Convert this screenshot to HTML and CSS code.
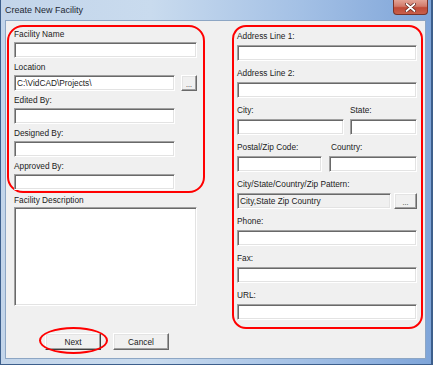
FILE: index.html
```html
<!DOCTYPE html>
<html lang="en">
<head>
  <meta charset="UTF-8">
  <title>Create New Facility</title>
  <link rel="stylesheet" href="styles.css">
</head>
<body>

<div class="window">
  <div class="titlebar">
    <span class="title">Create New Facility</span>
    <span class="close">
      <svg width="11" height="9" viewBox="0 0 11 9">
        <path d="M1.5 1 L9.5 8 M9.5 1 L1.5 8" stroke="#5a2018" stroke-width="3.2" stroke-linecap="round"/>
        <path d="M1.5 1 L9.5 8 M9.5 1 L1.5 8" stroke="#fff" stroke-width="1.8" stroke-linecap="round"/>
      </svg>
    </span>
  </div>

  <div class="client">
    <!-- left column: facility info -->
    <div class="col-left">
      <div class="group group-left">
        <div class="field">
          <label>Facility Name</label>
          <input class="box wide" type="text">
        </div>
        <div class="field">
          <label>Location</label>
          <div class="row">
            <input class="box" type="text" value="C:\VidCAD\Projects\">
            <button class="btn browse">...</button>
          </div>
        </div>
        <div class="field">
          <label>Edited By:</label>
          <input class="box" type="text">
        </div>
        <div class="field">
          <label>Designed By:</label>
          <input class="box" type="text">
        </div>
        <div class="field">
          <label>Approved By:</label>
          <input class="box" type="text">
        </div>
      </div>

      <label class="desc-label">Facility Description</label>
      <textarea class="box desc"></textarea>

      <div class="actions">
        <span class="marked"><button class="btn action default">Next</button></span>
        <button class="btn action">Cancel</button>
      </div>
    </div>

    <!-- right column: address -->
    <div class="col-right">
      <div class="group group-right">
        <div class="field">
          <label>Address Line 1:</label>
          <input class="box" type="text">
        </div>
        <div class="field">
          <label>Address Line 2:</label>
          <input class="box" type="text">
        </div>
        <div class="pair city-state">
          <div>
            <label>City:</label>
            <input class="box" type="text">
          </div>
          <div>
            <label>State:</label>
            <input class="box" type="text">
          </div>
        </div>
        <div class="pair zip-country">
          <div>
            <label>Postal/Zip Code:</label>
            <input class="box" type="text">
          </div>
          <div>
            <label class="indent">Country:</label>
            <input class="box" type="text">
          </div>
        </div>
        <div class="field">
          <label>City/State/Country/Zip Pattern:</label>
          <div class="row pattern">
            <input class="box readonly" type="text" value="City,State Zip Country" readonly>
            <button class="btn browse">...</button>
          </div>
        </div>
        <div class="field">
          <label>Phone:</label>
          <input class="box" type="text">
        </div>
        <div class="field">
          <label>Fax:</label>
          <input class="box" type="text">
        </div>
        <div class="field">
          <label>URL:</label>
          <input class="box" type="text">
        </div>
      </div>
    </div>
  </div>
</div>

</body>
</html>
```

FILE: styles.css
```css
body { margin: 0; font-family: "Liberation Sans", Arial, sans-serif; font-size: 8.3px; color: #1b1b1b; }

.window { width: 433px; height: 365px; box-sizing: border-box; display: flex; flex-direction: column; border: 1px solid #3d5f8c; border-top: 0; border-right-width: 2px; padding: 0 5px 5px 4px; background: linear-gradient(90deg, #c3d5ea 0%, #c9dbee 35%, #a3c0e5 70%, #7fa5d9 100%); }

.titlebar { height: 20px; flex: none; display: flex; justify-content: space-between; align-items: flex-start; margin-right: -2px; }
.title { font-size: 9px; line-height: 20px; color: #1e2833; }
.close { width: 35px; height: 15px; box-sizing: border-box; display: flex; align-items: center; justify-content: center; border: 1px solid #7a3328; border-top: 0; border-radius: 0 0 4px 4px; background: linear-gradient(#e3a496 0%, #d27a6a 45%, #c04a37 55%, #c8604b 100%); }

.client { flex: 1; display: flex; gap: 27px; padding: 4px 0 0 1px; background: #f0f0f0; border: 1px solid #8da6c4; }

.group { border: 2px solid #f00; }
.group-left { width: 198px; box-sizing: border-box; padding: 2px 6px 1px 5px; border-radius: 16px; }
.group-right { width: 191px; box-sizing: border-box; padding: 4px 4px 7px 3px; border-radius: 14px; }

label { display: block; height: 10px; line-height: 10px; white-space: nowrap; }
.group-left label { margin-bottom: 3px; }
.group-left .field + .field { margin-top: 4px; }
.group-right label { margin-bottom: 4px; }
.group-right .field + .field,
.group-right .field + .pair,
.group-right .pair + .pair,
.group-right .pair + .field { margin-top: 7px; }
.indent { padding-left: 2px; }

.box { display: block; box-sizing: border-box; width: 161px; height: 16px; margin: 0; padding: 0 2px; font: inherit; color: #1b1b1b; background: #fff; border: 1px solid; border-color: #a0a0a0 #fff #fff #a0a0a0; box-shadow: inset 1px 1px 0 #696969, inset -1px -1px 0 #e3e3e3; outline: none; }
.group-right .box { width: 180px; }
.box.wide { width: 183px; }
.box.readonly { background: #f0f0f0; }

.row { display: flex; gap: 6px; }
.row.pattern { gap: 3px; }
.group-right .row.pattern .box { width: 154px; }

.pair { display: grid; }
.city-state { grid-template-columns: 107px 67px; column-gap: 6px; }
.zip-country { grid-template-columns: 85px 88px; column-gap: 7px; }
.group-right .pair .box { width: 100%; }

.btn { box-sizing: border-box; margin: 0; padding: 0; font: inherit; color: #1b1b1b; background: #f0f0f0; border: 1px solid; border-color: #fff #696969 #696969 #fff; box-shadow: inset -1px -1px 0 #a0a0a0, inset 1px 1px 0 #e3e3e3; }
.browse { width: 16px; height: 16px; font-size: 7px; line-height: 14px; padding-top: 2px; }
.pattern .browse { width: 23px; }

.desc-label { margin: 2px 0 2px 7px; }
.desc { width: 183px; height: 99px; margin-left: 7px; resize: none; }

.actions { display: flex; gap: 12px; margin: 27px 0 0 38px; }
.action { width: 56px; height: 17px; }
.default { border-color: #fff #404040 #404040 #fff; }
.marked { position: relative; display: block; }
.marked::after { content: ""; position: absolute; top: -6px; bottom: -4px; left: -6px; right: -7px; border: 2px solid #f00; border-radius: 50%; }
```
